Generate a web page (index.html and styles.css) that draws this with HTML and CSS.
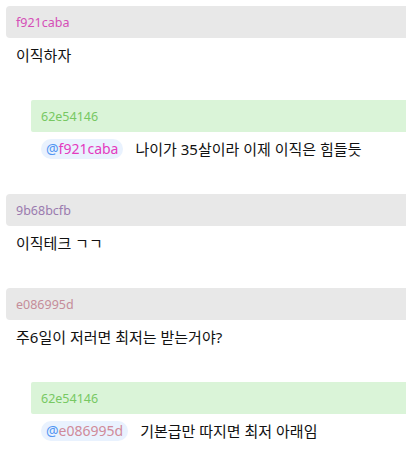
FILE: index.html
```html
<!DOCTYPE html>
<html lang="ko">
<head>
<meta charset="utf-8">
<link rel="stylesheet" href="styles.css">
</head>
<body>
<div class="thread">
  <div class="comment">
    <div class="head"><span class="uid" style="--c:#f921ca">f921caba</span></div>
    <div class="body">이직하자</div>
    <div class="reply">
      <div class="head green"><span class="uid" style="--c:#62e541">62e54146</span></div>
      <div class="body"><span class="mention">@<span class="uid" style="--c:#f921ca">f921caba</span></span><span class="text">나이가 35살이라 이제 이직은 힘들듯</span></div>
    </div>
  </div>
  <div class="comment">
    <div class="head"><span class="uid" style="--c:#9b68bc">9b68bcfb</span></div>
    <div class="body">이직테크 ㄱㄱ</div>
  </div>
  <div class="comment">
    <div class="head"><span class="uid" style="--c:#e08699">e086995d</span></div>
    <div class="body">주6일이 저러면 최저는 받는거야?</div>
    <div class="reply">
      <div class="head green"><span class="uid" style="--c:#62e541">62e54146</span></div>
      <div class="body"><span class="mention">@<span class="uid" style="--c:#e08699">e086995d</span></span><span class="text">기본급만 따지면 최저 아래임</span></div>
    </div>
  </div>
</div>
</body>
</html>
```
FILE: styles.css
```css
html, body {
  margin: 0;
  padding: 0;
  background: #fff;
  overflow: hidden;
}
body {
  padding: 6px 0 0 6px;
  font-family: "Noto Sans", "Noto Sans CJK KR", sans-serif;
  color: #111;
}
.thread {
  width: 420px;
}
.comment {
  margin-bottom: 28px;
}
.head {
  height: 32px;
  background: #e8e8e8;
  border-radius: 4px 0 0 4px;
  padding-left: 10px;
  display: flex;
  align-items: center;
  font-size: 12.5px;
}
.head.green {
  background: #daf4d8;
  border-radius: 2px 0 0 2px;
}
.head .uid {
  color: color-mix(in srgb, var(--c) 62%, #999);
}
.body {
  font-size: 15px;
  line-height: 22px;
  padding: 6px 10px;
  display: flex;
  align-items: center;
}
.reply {
  margin: 28px 0 0 25px;
}
.mention {
  background: #e9f2fe;
  color: #5296f2;
  border-radius: 10px;
  height: 20px;
  line-height: 20px;
  padding: 0 5px;
  font-size: 14px;
  margin-right: 12px;
}
.mention .uid {
  color: color-mix(in srgb, var(--c) 78%, #999);
}
```
